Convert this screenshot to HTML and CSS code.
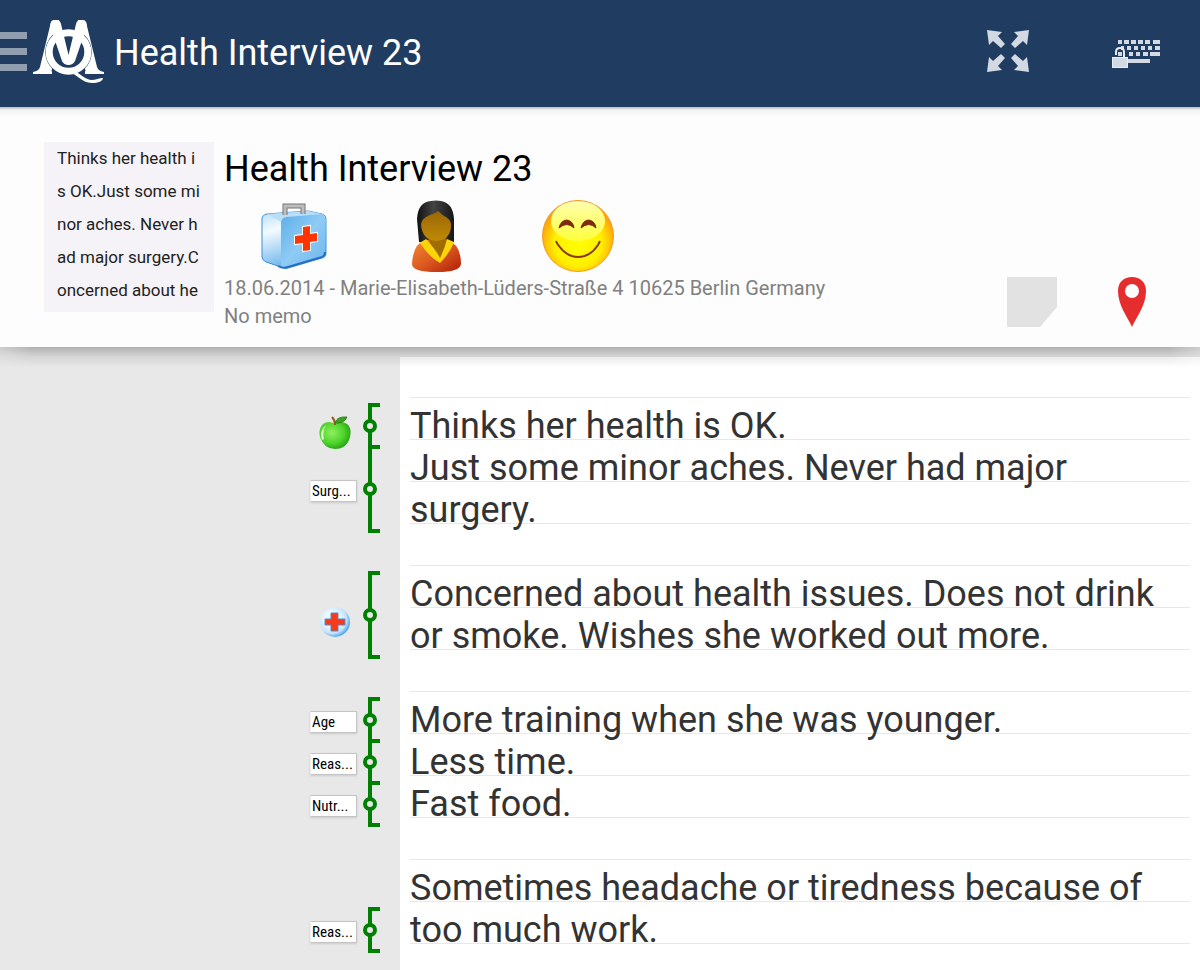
FILE: index.html
```html
<!DOCTYPE html>
<html lang="en">
  <head>
    <meta charset="utf-8">
    <meta name="viewport" content="width=device-width, initial-scale=1">
    <title>Health Interview 23</title>
    <link rel="stylesheet" href="styles.css">
  </head>
  <body>
    <header class="app-bar">
      <button type="button" class="menu-button" aria-label="Menu">
        <span></span><span></span><span></span>
      </button>
      <svg class="logo" viewBox="0 0 71 63" fill="#fff" aria-hidden="true">
        <path d="M18 2 Q19 0 22 0 H26 L19 49 Q18 51 19 52 V54 H0 V52 Q6 51 7 47 Z"/>
        <path d="M53 2 Q52 0 49 0 H45 L52 49 Q53 51 52 52 V54 H71 V52 Q65 51 64 47 Z"/>
        <circle cx="35.5" cy="32" r="23.2" fill="#203c60"/>
        <path d="M37 50 C45 50 50 59 58 60 C63 60 66 58 70 58 C70 61 65 63 59 63 C48 63 44 53 36 53 Z"/>
        <circle cx="35.5" cy="32" r="19.3" fill="none" stroke="#fff" stroke-width="7"/>
        <path d="M17 6 L18 2 Q19 0 22 0 H24 Q27 0 28 4 L35.5 35 L43 4 Q44 0 47 0 H49 Q52 0 53 2 L54 6 L42 41 Q40 45 35.5 45 Q31 45 29 41 Z"/>
      </svg>
      <h1>Health Interview 23</h1>
      <button type="button" class="action" aria-label="Full screen">
        <svg width="42" height="42" viewBox="0 0 42 42" fill="#d2d9e2">
          <path id="arrow" d="M0 0 L15 2 L11 6 L18 14 L14 18 L6 11 L2 15 Z"/>
          <use href="#arrow" transform="translate(42 0) scale(-1 1)"/>
          <use href="#arrow" transform="translate(0 42) scale(1 -1)"/>
          <use href="#arrow" transform="translate(42 42) scale(-1 -1)"/>
        </svg>
      </button>
      <button type="button" class="action" aria-label="Unlock keyboard">
        <svg width="48" height="34" viewBox="0 -6 48 34" fill="#d2d9e2">
          <path d="M6 0h4v4h-4z M12 0h5v4h-5z M19 0h5v4h-5z M26 0h5v4h-5z M33 0h5v4h-5z M41 0h7v4h-7z"/>
          <path d="M9 6h3v4h-3z M15 6h4v4h-4z M22 6h4v4h-4z M29 6h4v4h-4z M36 6h4v4h-4z M43 6h5v4h-5z"/>
          <path d="M6 12h4v4h-4z M17 12h4v4h-4z M24 12h4v4h-4z M31 12h5v4h-5z M38 12h10v4h-10z"/>
          <path d="M16 19h22v4h-22z"/>
          <path d="M4 15 V12 Q4 8 8 8 Q12 8 12 12 V18" fill="none" stroke="#e6eaef" stroke-width="2"/>
          <rect x="0.5" y="17.5" width="15" height="10" stroke="#e9edf2"/>
        </svg>
      </button>
    </header>

    <section class="summary">
      <div class="thumbnail">
        Thinks her health i<br>s OK.Just some mi<br>nor aches. Never h<br>ad major surgery.C<br>oncerned about he
      </div>
      <div class="info">
        <h2>Health Interview 23</h2>
        <div class="symbols">
          <svg viewBox="0 0 72 72" role="img" aria-label="First aid kit">
            <defs>
              <linearGradient id="kit-side" gradientUnits="userSpaceOnUse" x1="6" y1="16" x2="22" y2="68">
                <stop offset="0" stop-color="#c5e5fa"/><stop offset="0.3" stop-color="#f4fbff"/><stop offset="1" stop-color="#6cb4ec"/>
              </linearGradient>
              <linearGradient id="kit-front" x1="0" y1="0" x2="1" y2="1">
                <stop offset="0" stop-color="#5caee9"/><stop offset="0.5" stop-color="#8ecbf5"/><stop offset="1" stop-color="#6cb7ee"/>
              </linearGradient>
            </defs>
            <path d="M4 19 Q4 15 9 14 L50 11 L64 14 Q68 15 68 19 V54 Q68 57 64 58 L30 68 Q27 69 23 67 L8 62 Q4 60 4 57 Z" fill="url(#kit-side)" stroke="#3d8fd8" stroke-width="1"/>
            <path d="M9 14 L50 11 L64 14 L29 17 Q23 18 23 22 Z" fill="#b9dff8"/>
            <path d="M23 23 Q23 18 28 17 L63 14 Q67 14 67 19 V54 Q67 56 64 57 L30 67 Q23 69 23 63 Z" fill="url(#kit-front)"/>
            <path d="M67 52 Q67 56 64 57 L30 67 Q25 69 20 66" fill="none" stroke="#2470c8" stroke-width="2"/>
            <path d="M27 15 V6 H45 V14" fill="none" stroke="#777" stroke-width="5"/>
            <path d="M27 15 V6 H45 V14" fill="none" stroke="#bdbdbd" stroke-width="3"/>
            <path d="M45 27 L52 26 V34 L59 33 V41 L52 42 V50 L45 51 V43 L37 44 V36 L45 35 Z" fill="#fe3500" stroke="#fff" stroke-width="2" paint-order="stroke"/>
          </svg>
          <svg viewBox="0 0 72 72" role="img" aria-label="Person">
            <defs>
              <linearGradient id="dress" x1="0" y1="0" x2="1" y2="1">
                <stop offset="0" stop-color="#f08a32"/><stop offset="0.5" stop-color="#dc5a20"/><stop offset="1" stop-color="#b01c06"/>
              </linearGradient>
              <linearGradient id="skin" x1="0" y1="0" x2="0" y2="1">
                <stop offset="0" stop-color="#9a6605"/><stop offset="1" stop-color="#c08a05"/>
              </linearGradient>
              <linearGradient id="hair" x1="0" y1="0" x2="1" y2="0">
                <stop offset="0" stop-color="#111"/><stop offset="0.45" stop-color="#444"/><stop offset="1" stop-color="#161616"/>
              </linearGradient>
            </defs>
            <path d="M19 42 L17 19 Q18 2 31 1 Q36 0 41 1 Q53 3 54 19 L54 42 Z" fill="url(#hair)"/>
            <path d="M12 64 Q13 44 25 40 H48 Q61 45 61 64 Q60 72 37 72 Q12 72 12 64 Z" fill="url(#dress)"/>
            <path d="M28 36 H46 L47 43 L40 59 L30 44 Z" fill="#a06c04"/>
            <path d="M21 24 Q22 18 30 15 Q36 13 38 11 Q42 15 46 17 Q51 20 51 25 Q51 40 36 41 Q22 40 21 24 Z" fill="url(#skin)"/>
            <path d="M26 39 Q36 50 40 58 Q45 48 47 39 L54 42 Q50 53 40 63 Q29 57 20 43 Z" fill="#fbd409"/>
          </svg>
          <svg viewBox="0 0 72 72" role="img" aria-label="Smiley">
            <defs>
              <radialGradient id="face" cx="0.5" cy="0.6" r="0.55">
                <stop offset="0" stop-color="#ffff00"/><stop offset="0.6" stop-color="#fff000"/><stop offset="1" stop-color="#ff9d0d"/>
              </radialGradient>
              <linearGradient id="shine" x1="0" y1="0" x2="0" y2="1">
                <stop offset="0" stop-color="#ffffb0"/><stop offset="1" stop-color="#ffff3c"/>
              </linearGradient>
            </defs>
            <circle cx="36" cy="36" r="35.5" fill="url(#face)" stroke="#f59a23"/>
            <ellipse cx="36" cy="21" rx="27" ry="20" fill="url(#shine)"/>
            <path d="M17 28 Q19 20 25 20 Q31 21 32 28 Q25 21 17 28 Z M39 28 Q41 20 47 20 Q53 21 54 28 Q47 21 39 28 Z" fill="#802a0c" stroke="#802a0c"/>
            <path d="M14 41 Q15 44 17 46 Q25 57 36 57 Q48 57 56 45 L58 41" fill="none" stroke="#8a3a10" stroke-width="2"/>
          </svg>
        </div>
        <p>18.06.2014 - Marie-Elisabeth-Lüders-Straße 4 10625 Berlin Germany</p>
        <p>No memo</p>
      </div>
      <div class="summary-actions">
        <button type="button" aria-label="Memo">
          <svg width="50" height="50" viewBox="0 0 50 50"><path d="M0 0 H50 V30 L33 50 H0 Z" fill="#e2e2e2"/></svg>
        </button>
        <button type="button" aria-label="Location">
          <svg width="50" height="50" viewBox="0 0 50 50"><path fill-rule="evenodd" d="M25 50 C20 39 11 28 11 14 C11 5 17 0 25 0 C33 0 39 5 39 14 C39 28 30 39 25 50 Z M25 7 A7 7 0 1 0 25 21 A7 7 0 1 0 25 7 Z" fill="#e52d2d"/></svg>
        </button>
      </div>
    </section>

    <main class="transcript">
      <div class="segment">
        <div class="coding">
          <svg class="code-icon" viewBox="0 0 32 36" role="img" aria-label="Health">
            <defs>
              <radialGradient id="apple" cx="0.4" cy="0.4" r="0.65">
                <stop offset="0" stop-color="#8df05c"/><stop offset="0.6" stop-color="#4fd42c"/><stop offset="1" stop-color="#22a010"/>
              </radialGradient>
            </defs>
            <path d="M16 9 Q10 5 4 9 Q-1 14 1 22 Q5 34 16 34 Q28 34 31 22 Q33 13 28 9 Q22 5 16 9 Z" fill="url(#apple)"/>
            <path d="M3 25 Q0 16 7 10 Q3 17 5 24 Z" fill="#fff" opacity="0.8"/>
            <path d="M16 10 Q16 5 13 2" fill="none" stroke="#9a5a1c" stroke-width="2"/>
            <path d="M16 8 Q18 1 28 2 Q25 9 16 8 Z" fill="#36a51c" stroke="#21730f" stroke-width="0.8"/>
          </svg>
          <span class="bracket"></span>
        </div>
        <p>Thinks her health is OK.</p>
      </div>
      <div class="segment">
        <div class="coding">
          <span class="code-label">Surg...</span>
          <span class="bracket"></span>
        </div>
        <p>Just some minor aches. Never had major surgery.</p>
      </div>
      <div class="segment spaced">
        <div class="coding">
          <svg class="code-icon" viewBox="0 0 32 36" role="img" aria-label="Medical">
            <defs>
              <radialGradient id="ball" cx="0.4" cy="0.4" r="0.6">
                <stop offset="0.4" stop-color="#f0f8ff"/><stop offset="0.8" stop-color="#c4e3fb"/><stop offset="1" stop-color="#5aaeed"/>
              </radialGradient>
            </defs>
            <circle cx="16" cy="18" r="15" fill="url(#ball)"/>
            <path d="M12 9 H19 V15 H26 V21 H19 V27 H12 V21 H6 V15 H12 Z" fill="#f8391a" stroke="#4b8fce" stroke-width="1"/>
          </svg>
          <span class="bracket"></span>
        </div>
        <p>Concerned about health issues. Does not drink or smoke. Wishes she worked out more.</p>
      </div>
      <div class="segment spaced">
        <div class="coding">
          <span class="code-label">Age</span>
          <span class="bracket"></span>
        </div>
        <p>More training when she was younger.</p>
      </div>
      <div class="segment">
        <div class="coding">
          <span class="code-label">Reas...</span>
          <span class="bracket"></span>
        </div>
        <p>Less time.</p>
      </div>
      <div class="segment">
        <div class="coding">
          <span class="code-label">Nutr...</span>
          <span class="bracket"></span>
        </div>
        <p>Fast food.</p>
      </div>
      <div class="segment spaced">
        <div class="coding last-line">
          <span class="code-label">Reas...</span>
          <span class="bracket"></span>
        </div>
        <p>Sometimes headache or tiredness because of too much work.</p>
      </div>
    </main>
  </body>
</html>
```
FILE: styles.css
```css
:root {
  --bar-color: #203c60;
  --gutter-color: #e8e8e8;
  --code-color: #008000;
  --gutter-width: 400px;
  --line: 42px;
}
*, *:before, *:after { box-sizing: border-box; }
body {
  margin: 0;
  min-height: 100vh;
  display: flex;
  flex-direction: column;
  font-family: Roboto, sans-serif;
  background-color: var(--gutter-color);
}
h1, h2, p { margin: 0; font-weight: normal; }
button {
  border: none;
  padding: 0;
  background: none;
  cursor: pointer;
}
svg { display: block; }

/* top bar */
.app-bar {
  height: 107px;
  padding-bottom: 5px;
  display: flex;
  align-items: center;
  background-color: var(--bar-color);
  color: #fff;
}
.menu-button {
  width: 27px;
  display: grid;
  gap: 9px;
}
.menu-button span {
  height: 7px;
  background-color: #909eb0;
}
.logo {
  width: 71px;
  height: 63px;
  margin: 0 10px 0 6px;
}
.app-bar h1 {
  flex: 1;
  padding-top: 3px;
  font-size: 36px;
}
.action {
  width: 128px;
  display: grid;
  place-items: center;
}

/* document summary */
.summary {
  position: relative;
  display: flex;
  padding: 35px 43px 17px 44px;
  background: linear-gradient(#bbb, #f2f2f2 3px, #fdfdfd 10px);
}
.summary::after {
  content: "";
  position: absolute;
  top: 100%;
  left: 0;
  right: 0;
  height: 20px;
  background: linear-gradient(rgba(0, 0, 0, 0.24), rgba(0, 0, 0, 0.08) 10px, transparent);
  mask-image: linear-gradient(to right, rgba(0, 0, 0, 0.5), #000 32px, #000 calc(100% - 32px), rgba(0, 0, 0, 0.5));
  pointer-events: none;
}
.thumbnail {
  width: 170px;
  height: 170px;
  padding-left: 13px;
  background-color: #f5f3f7;
  color: #222;
  font-size: 17px;
  line-height: 33px;
  white-space: nowrap;
}
.info {
  flex: 1;
  margin-left: 10px;
}
.info h2 {
  font-size: 36px;
  line-height: 54px;
  color: #000;
}
.symbols {
  display: flex;
  gap: 70px;
  margin: 4px 0 2px 34px;
}
.symbols svg {
  width: 72px;
  height: 72px;
}
.info p {
  font-size: 20px;
  line-height: 28px;
  color: #808080;
}
.summary-actions {
  display: flex;
  align-items: flex-end;
  gap: 50px;
  margin-bottom: 3px;
}

/* coded text on ruled paper */
.transcript {
  flex: 1;
  margin-top: 10px;
  padding: 46px 0 20px;
  background:
    repeating-linear-gradient(transparent 0 40px, #e8e8e8 40px 41px, transparent 41px 42px) 410px 0 / calc(100% - 420px) 100% no-repeat,
    linear-gradient(to right, var(--gutter-color) var(--gutter-width), #fff var(--gutter-width));
}
.segment {
  display: grid;
  grid-template-columns: var(--gutter-width) 1fr;
}
.segment.spaced {
  margin-top: var(--line);
}
.segment p {
  margin-bottom: -2px;
  padding: 2px 10px 0;
  font-size: 36px;
  line-height: var(--line);
  color: #333;
}
.coding {
  display: flex;
  align-items: center;
  justify-content: flex-end;
  padding-right: 20px;
  margin-bottom: -4px;
}
.coding.last-line {
  align-self: end;
  height: 46px;
}
.bracket {
  position: relative;
  align-self: stretch;
  width: 12px;
  margin-left: 11px;
  border: 4px solid var(--code-color);
  border-right: none;
}
.bracket::before {
  content: "";
  position: absolute;
  left: -9px;
  top: calc(50% - 7px);
  width: 14px;
  height: 14px;
  border: 4px solid var(--code-color);
  border-radius: 50%;
  background-color: var(--gutter-color);
}
.code-label {
  width: 47px;
  height: 22px;
  margin-top: 4px;
  padding-left: 1px;
  overflow: hidden;
  background-color: #fff;
  border: 1px solid #c4c4c4;
  border-left-color: #eee;
  box-shadow: 0 1px 2px rgba(0, 0, 0, 0.12);
  color: #000;
  font-family: "Roboto Condensed", "Liberation Sans Narrow", "Liberation Sans", sans-serif;
  font-size: 15px;
  line-height: 20px;
}
/* icons hang a little below the bracket's knob */
.code-icon {
  width: 32px;
  height: 36px;
  margin: 7px 6px -7px 0;
}
```
